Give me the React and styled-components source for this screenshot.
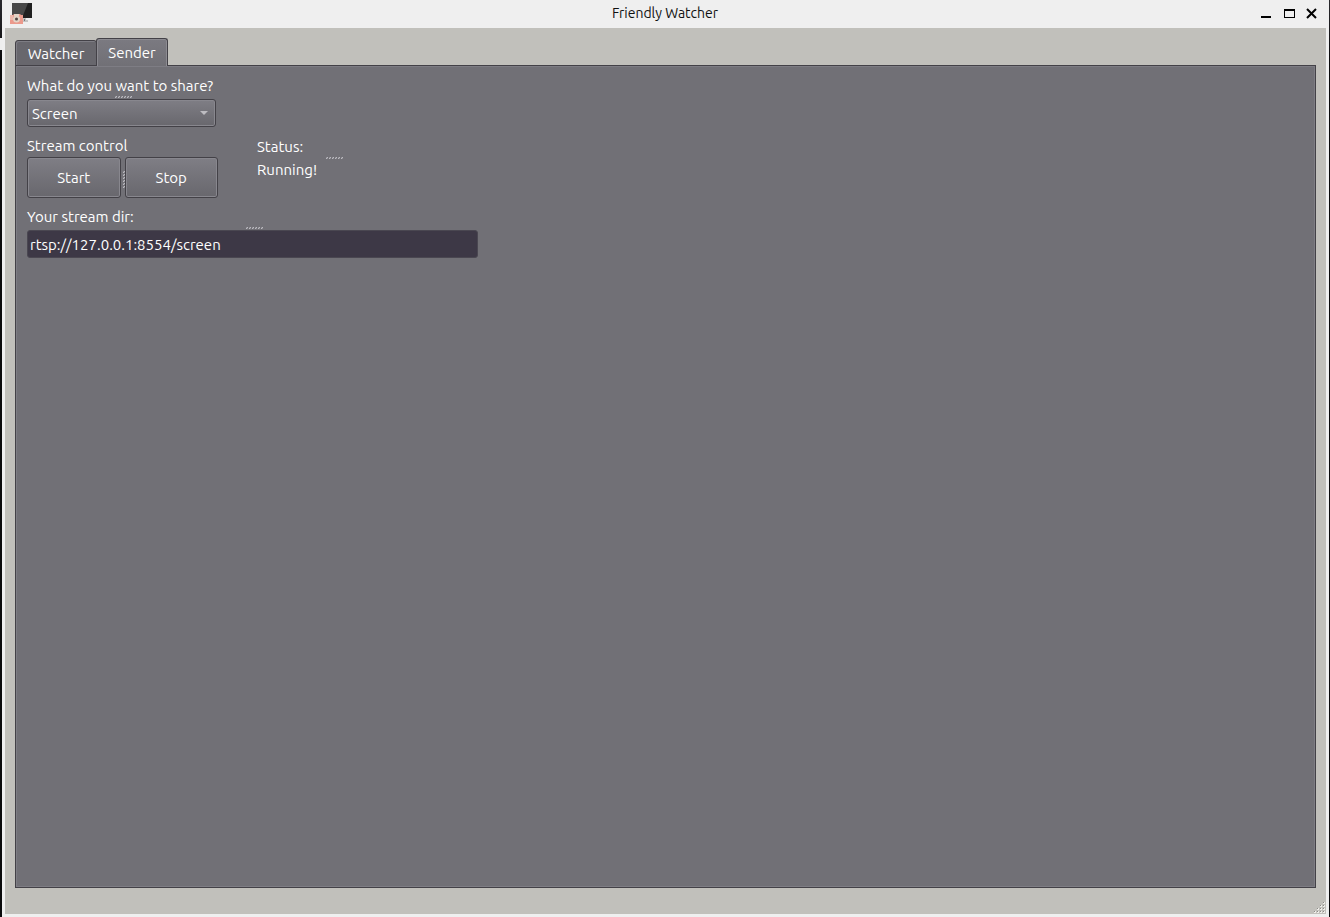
import React, { useState } from "react";
import styled, { createGlobalStyle, css } from "styled-components";

const GlobalStyle = createGlobalStyle`
  *, *::before, *::after { box-sizing: border-box; }
  html, body { margin: 0; }
  body { background: #0b0b0d; }
  button, input, select { font: inherit; color: inherit; }
`;

const Desktop = styled.div`
  min-height: 100vh;
  display: flex;
  padding: 0 1px 0 2px;
  background:
    linear-gradient(#eee, #eee) 0 38px / 2px 12px no-repeat,
    linear-gradient(#2a2a2e 0, #0b0b0d 60px, #0b0b0d 100%);
  font-family: Ubuntu, "Noto Sans", sans-serif;
  font-size: 15px;
  line-height: 20px;
  color: #fff;
`;

const Window = styled.div`
  flex: 1;
  display: flex;
  flex-direction: column;
  padding: 0 3px 3px;
  background: #efefef;
`;

const TitleBar = styled.header`
  height: 28px;
  display: grid;
  grid-template-columns: 1fr auto 1fr;
  align-items: center;
  padding: 0 6px 0 5px;
  color: #111;
`;

const AppIcon = styled.svg`
  display: block;
  width: 24px;
  height: 24px;
`;

const Title = styled.h1`
  margin: 0;
  padding-bottom: 2px;
  font-size: 14px;
  line-height: 20px;
  font-weight: 400;
`;

const WindowButtons = styled.div`
  display: flex;
  justify-content: flex-end;
  gap: 7px;
`;

const WindowButton = styled.button`
  width: 16px;
  height: 16px;
  padding: 0;
  border: 0;
  background: none;
  svg { display: block; }
`;

const Body = styled.main`
  flex: 1;
  display: flex;
  flex-direction: column;
  padding: 10px 10px 0;
  background: #c1c0bb;
`;

const TabList = styled.div`
  display: flex;
  align-items: flex-end;
  height: 28px;
  margin-bottom: -1px;
`;

const Tab = styled.button`
  position: relative;
  height: 26px;
  width: 82px;
  padding: 2px 0 0;
  border: 1px solid #434147;
  border-radius: 3px 3px 0 0;
  background: #68676d;
  box-shadow: inset 1px 1px #7e7d84;
  line-height: 22px;

  ${(p) => p.$active && css`
    height: 28px;
    width: 72px;
    margin-left: -1px;
    border-bottom: 0;
    padding: 0;
    background: linear-gradient(#7b7a81, #717076);
    box-shadow: inset 1px 1px #8c8b91, inset -1px 0 #8c8b91;
  `}
`;

const Panel = styled.section`
  flex: 1;
  display: flex;
  flex-direction: column;
  gap: 9px;
  padding: 10px 11px;
  border: 1px solid #434147;
  background: #717076;
  box-shadow: inset 0 0 0 1px #7e7d84;
`;

const Group = styled.div`
  display: flex;
  flex-direction: column;
  width: ${(p) => p.$width}px;
  max-width: 100%;
`;

const ControlRow = styled.div`
  display: flex;
  align-items: flex-start;
  gap: 39px;
`;

const StatusGroup = styled(Group)`
  padding-top: 1px;
`;

const Label = styled.label`
  display: block;
  white-space: nowrap;
`;

const Caption = styled.div`
  white-space: nowrap;
`;

const Grip = styled.div`
  display: flex;
  align-items: center;
  justify-content: center;
  ${(p) => (p.$vertical
    ? "width: 4px; padding-top: 4px; justify-content: flex-end;"
    : "height: 3px; padding-left: 4px;")}
`;

const SelectBox = styled.div`
  display: grid;
  align-items: center;
  svg { grid-area: 1 / 1; justify-self: end; margin-right: 8px; pointer-events: none; }
`;

const raised = css`
  border: 1px solid #434147;
  border-radius: 3px;
  background: linear-gradient(#7f7e85, #68676d);
  box-shadow: inset 0 0 0 1px #88878e;
`;

const Select = styled.select`
  ${raised}
  grid-area: 1 / 1;
  appearance: none;
  width: 100%;
  height: 28px;
  padding: 2px 20px 0 4px;
  option { color: #111; }
`;

const ButtonRow = styled.div`
  display: flex;
  padding-top: 1px;
`;

const PushButton = styled.button`
  ${raised}
  flex: 1;
  height: 41px;
  padding: 0;
`;

const TextField = styled.input`
  width: 100%;
  height: 28px;
  padding: 0 2px;
  border: 1px solid #4a4751;
  border-radius: 3px;
  background: #3d3846;
`;

const StatusBar = styled.footer`
  height: 26px;
  display: flex;
  align-items: flex-end;
  justify-content: flex-end;
  margin-right: -10px;
  svg { display: block; }
`;

const steps = [0, 1, 2, 3, 4, 5];

function SplitGrip({ vertical }) {
  return (
    <Grip $vertical={vertical}>
      <svg width={vertical ? 2 : 18} height={vertical ? 18 : 3} aria-hidden="true">
        {steps.map((i) => {
          const x = vertical ? 0 : i * 3;
          const y = vertical ? i * 3 : 0;
          return (
            <g key={i}>
              <rect x={x} y={y} width="2" height="2" fill="#8d8c92" />
              <rect x={x + 1} y={y} width="1" height="1" fill="#bbbac0" />
              <rect x={x} y={y + 1} width="1" height="1" fill="#bbbac0" />
            </g>
          );
        })}
      </svg>
    </Grip>
  );
}

function SizeGrip() {
  return (
    <svg width="12" height="12" aria-hidden="true">
      {[0, 1, 2, 3].flatMap((r) =>
        [0, 1, 2, 3].filter((c) => c >= 3 - r).map((c) => (
          <g key={`${r}-${c}`}>
            <rect x={c * 3} y={r * 3} width="2" height="2" fill="#eeede9" />
            <rect x={c * 3} y={r * 3} width="1" height="1" fill="#8d8c88" />
          </g>
        ))
      )}
    </svg>
  );
}

export default function App() {
  const [tab, setTab] = useState("Sender");
  const [source, setSource] = useState("Screen");
  const [running, setRunning] = useState(true);

  return (
    <Desktop>
      <GlobalStyle />
      <Window>
        <TitleBar>
          <AppIcon viewBox="0 0 24 24" aria-hidden="true">
            <path d="M2 1h20v15H2z" fill="#484848" />
            <path d="M18 1h4v15H12z" fill="#202020" />
            <path d="M13 16h3v2h2v2h-5z" fill="#c4c4c4" />
            <path d="M14 17h1v2h-1z" fill="#777" />
            <path d="M0 13h3l1-1h6l1 1h2v9H0z" fill="#eb9a8c" />
            <path d="M0 13h3v5H0z" fill="#edb9ad" />
            <path d="M4 12h5v2H4z" fill="#e4d3c6" />
            <circle cx="6.5" cy="17" r="3.5" fill="#e4d3c6" />
            <circle cx="6.5" cy="17" r="1.5" fill="#514744" />
          </AppIcon>
          <Title>Friendly Watcher</Title>
          <WindowButtons>
            <WindowButton aria-label="Minimize">
              <svg width="16" height="16"><path d="M3 10h10v2H3z" /></svg>
            </WindowButton>
            <WindowButton aria-label="Maximize">
              <svg width="16" height="16"><path fillRule="evenodd" d="M3 3h11v9H3zM4 5v6h9V5z" /></svg>
            </WindowButton>
            <WindowButton aria-label="Close">
              <svg width="16" height="16"><path d="M3 3l9 9M12 3l-9 9" stroke="#000" strokeWidth="2" /></svg>
            </WindowButton>
          </WindowButtons>
        </TitleBar>
        <Body>
          <TabList role="tablist">
            {["Watcher", "Sender"].map((name) => (
              <Tab key={name} role="tab" aria-selected={tab === name} $active={tab === name} onClick={() => setTab(name)}>
                {name}
              </Tab>
            ))}
          </TabList>
          <Panel role="tabpanel" aria-label={tab}>
            <Group $width={189}>
              <Label htmlFor="source">What do you want to share?</Label>
              <SplitGrip />
              <SelectBox>
                <Select id="source" value={source} onChange={(e) => setSource(e.target.value)}>
                  <option>Screen</option>
                  <option>Camera</option>
                </Select>
                <svg width="8" height="4" aria-hidden="true"><path d="M0 0h8L4 4z" fill="#bdbcc1" /></svg>
              </SelectBox>
            </Group>
            <ControlRow>
              <Group $width={191}>
                <Caption>Stream control</Caption>
                <ButtonRow>
                  <PushButton onClick={() => setRunning(true)}>Start</PushButton>
                  <SplitGrip vertical />
                  <PushButton onClick={() => setRunning(false)}>Stop</PushButton>
                </ButtonRow>
              </Group>
              <StatusGroup $width={152}>
                <Caption>Status:</Caption>
                <SplitGrip />
                <Caption role="status">{running ? "Running!" : "Stopped"}</Caption>
              </StatusGroup>
            </ControlRow>
            <Group $width={451}>
              <Label htmlFor="stream-dir">Your stream dir:</Label>
              <SplitGrip />
              <TextField id="stream-dir" defaultValue="rtsp://127.0.0.1:8554/screen" />
            </Group>
          </Panel>
          <StatusBar>
            <SizeGrip />
          </StatusBar>
        </Body>
      </Window>
    </Desktop>
  );
}
